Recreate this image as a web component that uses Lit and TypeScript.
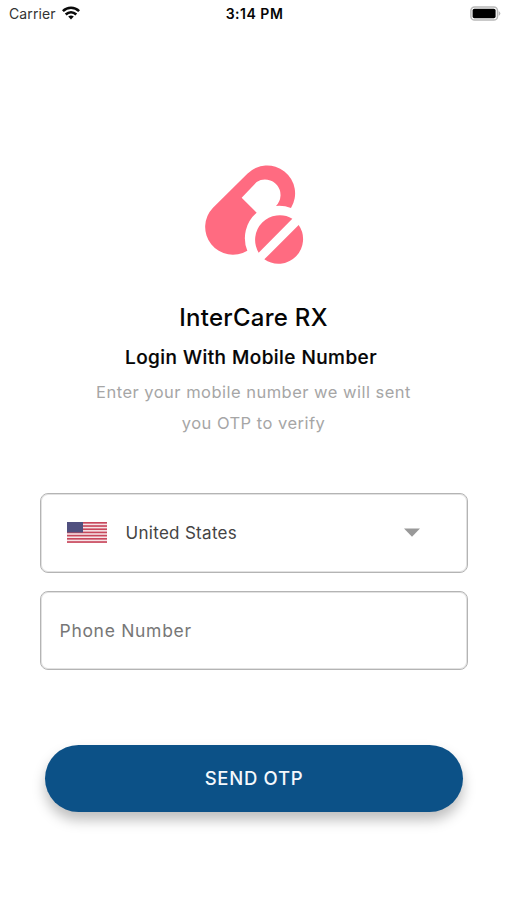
import { LitElement, html, css, svg } from "lit";
import { customElement } from "lit/decorators.js";

@customElement("app-root")
export class AppRoot extends LitElement {
  static styles = css`
    :host { display: block; height: 900px; background: #fff; font-family: Inter, "Liberation Sans", sans-serif; color: #050505; overflow: hidden; }
    * { box-sizing: border-box; }
    svg { display: block; }
    .screen { display: flex; flex-direction: column; height: 900px; }
    .status { display: grid; grid-template-columns: 1fr auto 1fr; align-items: center; height: 28px; padding: 0 6px 0 9px; font-size: 14px; line-height: 28px; }
    .carrier { display: flex; align-items: center; gap: 6px; color: #333; letter-spacing: 0.1px; }
    .wifi { margin-top: -3px; }
    .time { font-weight: 600; font-size: 14px; letter-spacing: 0.5px; margin-right: 1px; }
    .battery { justify-self: end; margin-top: -2px; }
    .logo { margin: 122px 0 0 190px; }
    .intro { display: flex; flex-direction: column; align-items: center; white-space: nowrap; margin-top: 20px; }
    .intro > * { margin: 0; }
    .name { font-size: 24px; line-height: 36px; font-weight: 500; letter-spacing: 0.28px; }
    .title { font-size: 19px; line-height: 28px; margin-top: 8px; font-weight: 500; letter-spacing: 0.44px; padding-right: 5px; -webkit-text-stroke: 0.2px #050505; }
    .hint { font-size: 16.5px; line-height: 30.5px; color: #a6a6a6; text-align: center; margin-top: 5px; letter-spacing: 0.48px; }
    .field { display: flex; align-items: center; width: 428px; height: 79.5px; margin-left: 40px; border: 1px solid #b4b4b4; border-radius: 8px; box-shadow: inset 0 0 0 1px #e2e2e2; font-size: 17px; }
    .country { margin-top: 55px; padding: 0 47px 0 25.5px; color: #444; letter-spacing: 0.3px; }
    .country span { flex: 1; margin-left: 19px; }
    .phone { margin-top: 18px; padding: 0 0 0 18.5px; font-size: 17.5px; color: #777; letter-spacing: 0.7px; }
    .send { display: block; font: 500 18.5px Inter, sans-serif; letter-spacing: 0.7px; color: #f4f8fc; background: #0c5187; width: 418px; height: 67px; margin: 75px 0 0 45px; padding: 0 0 1px; border: 0; border-radius: 34px; box-shadow: 0 8px 13px rgba(0, 0, 0, 0.26); }
  `;

  private stripes() {
    return [0, 1, 2, 3, 4, 5, 6].map(
      (i) => svg`<rect y=${i * 3.2} width="40" height="1.65" fill="#c8485c" />`
    );
  }

  render() {
    return html`
      <main class="screen">
        <header class="status">
          <div class="carrier">
            <span>Carrier</span>
            <svg class="wifi" width="18" height="14" viewBox="0 0 18 14" fill="none" stroke="#0a0a0a" stroke-width="2.6">
              <path d="M.9 5.1C5.5.6 12.5.6 17.1 5.1" />
              <path d="M3.7 8.5C6.9 5.6 11.1 5.6 14.3 8.5" />
              <path d="M6.2 10.5Q9 8.4 11.8 10.5L9 13.6Z" fill="#0a0a0a" stroke="none" />
            </svg>
          </div>
          <span class="time">3:14 PM</span>
          <svg class="battery" width="31" height="15" viewBox="0 0 31 15">
            <rect x=".9" y=".9" width="26.6" height="13.2" rx="3.7" fill="#fff" stroke="#b8b8b8" stroke-width="1.5" />
            <rect x="2.6" y="2.8" width="23" height="9.4" rx="1.8" />
            <path d="M28.7 5Q32 7.5 28.7 10Z" fill="#b8b8b8" />
          </svg>
        </header>
        <svg class="logo" width="130" height="130" viewBox="0 0 390 390" fill="#ff6b81">
          <path d="M172 302A83.2 83.2 0 0 1 69 173L172 71A83.9 83.9 0 0 1 303 174A100 100 0 0 0 258 168A46.5 46.5 0 0 0 200 96L155 143L200 188A100 100 0 0 0 172 302Z" />
          <path d="M206 308A74 74 0 0 1 307 206ZM326 225A74 74 0 0 1 223 328Z" />
        </svg>
        <section class="intro">
          <h1 class="name">InterCare RX</h1>
          <h2 class="title">Login With Mobile Number</h2>
          <p class="hint">Enter your mobile number we will sent<br />you OTP to verify</p>
        </section>
        <div class="field country">
          <svg width="40" height="21" viewBox="0 0 40 21">
            <rect width="40" height="21" fill="#f6e4e7" />
            ${this.stripes()}
            <rect width="16" height="10.5" fill="#50507f" />
          </svg>
          <span>United States</span>
          <svg width="16" height="9" viewBox="0 0 16 9"><path d="M0 .5H16L8 8.7Z" fill="#999" /></svg>
        </div>
        <div class="field phone">Phone Number</div>
        <button class="send">SEND OTP</button>
      </main>
    `;
  }
}
